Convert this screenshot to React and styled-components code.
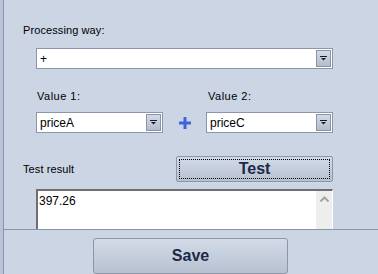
import React from 'react';
import styled, { createGlobalStyle } from 'styled-components';

const Global = createGlobalStyle`
  html, body {
    margin: 0;
    padding: 0;
    background: #cbd5e3;
  }
  body {
    font-family: "Liberation Sans", Arial, sans-serif;
    color: #000;
  }
`

const Window = styled.div`
  width: 378px;
  height: 274px;
  display: flex;
  overflow: hidden;
  background: #cbd5e3;
`

const Edge = styled.div`
  width: 3px;
  flex: none;
  background: #b7c3d7;
  border-right: 1px solid #8d97a7;
`

const Main = styled.div`
  flex: 1;
  display: flex;
  flex-direction: column;
`

const Panel = styled.div`
  height: 205px;
  flex: none;
  overflow: hidden;
  padding: 24px 0 0 19px;
  box-sizing: content-box;
`

const Label = styled.div`
  font-size: 11px;
  line-height: 13px;
  letter-spacing: ${(p) => p.spacing || '0.1px'};
  padding-left: ${(p) => p.indent || 0}px;
`

const Indent = styled.div`
  margin-left: 13px;
  width: 297px;
  margin-top: ${(p) => p.top || 0}px;
`

const Combo = styled.div`
  box-sizing: border-box;
  width: ${(p) => p.width || 297}px;
  height: 21px;
  border: 1px solid #8b96a8;
  background: #fff;
  padding: 1px;
  display: flex;
  align-items: center;
`

const ComboText = styled.span`
  flex: 1;
  font-size: 12px;
  padding-left: 2px;
  color: #000;
`

const ArrowBtn = styled.div`
  box-sizing: border-box;
  width: 15px;
  height: 17px;
  border: 1px solid #8a94a5;
  background: linear-gradient(#d3dae6, #b3bdcd);
  display: flex;
  align-items: center;
  justify-content: center;
`

const ValueGrid = styled.div`
  display: grid;
  grid-template-columns: 127px 43px 127px;
  row-gap: 9px;
  align-items: center;
`

const PlusSign = styled.div`
  display: flex;
  justify-content: center;
`

const TestRow = styled.div`
  display: flex;
  align-items: center;
  justify-content: space-between;
  width: 310px;
  margin-top: 23px;
`

const Button = styled.div`
  box-sizing: border-box;
  width: ${(p) => p.width}px;
  height: ${(p) => p.height}px;
  border: 1px solid #8c96a7;
  border-radius: ${(p) => p.radius || 2}px;
  background: linear-gradient(#d3dbe7, #b7c1d1);
  display: flex;
  align-items: center;
  justify-content: center;
  padding: 2px;
  font-size: 16px;
  font-weight: bold;
  color: #1c2a48;
`

const Focus = styled.div`
  box-sizing: border-box;
  width: 100%;
  height: 100%;
  border: 1px dotted #000;
  display: flex;
  align-items: center;
  justify-content: center;
`

const ResultBox = styled.div`
  box-sizing: border-box;
  width: 297px;
  height: 60px;
  margin: 7px 0 0 13px;
  border-top: 2px solid #6f6f6f;
  border-left: 2px solid #6f6f6f;
  border-right: 1px solid #fff;
  background: #fff;
  display: flex;
`

const ResultText = styled.div`
  flex: 1;
  font-size: 12px;
  padding: 3px 0 0 1px;
`

const ScrollBar = styled.div`
  width: 16px;
  background: #eeeeee;
  display: flex;
  justify-content: center;
  padding-top: 5px;
  align-items: flex-start;
`

const Footer = styled.div`
  flex: 1;
  border-top: 1px solid #8a95a7;
  padding: 8px 0 0 89px;
`

const Arrow = () => (
  <svg width="7" height="5" viewBox="0 0 7 5">
    <rect x="0" y="0" width="7" height="1" fill="#1a1a2a" />
    <path d="M1 2 H6 L3.5 4.5 Z" fill="#1a1a2a" />
  </svg>
)

const Select = ({ value, width }) => (
  <Combo width={width}>
    <ComboText>{value}</ComboText>
    <ArrowBtn><Arrow /></ArrowBtn>
  </Combo>
)

export default function App() {
  return (
    <Window>
      <Global />
      <Edge />
      <Main>
        <Panel>
          <Label>Processing way:</Label>
          <Indent top={11}>
            <Select value="+" />
          </Indent>
          <Indent top={21}>
            <ValueGrid>
              <Label indent={1} spacing="0.5px">Value 1:</Label>
              <div />
              <Label indent={2} spacing="0.5px">Value 2:</Label>
              <Select value="priceA" width={127} />
              <PlusSign>
                <svg width="12" height="12" viewBox="0 0 12 12">
                  <rect x="4.5" y="0" width="3" height="12" fill="#4262de" />
                  <rect x="0" y="4.5" width="12" height="3" fill="#4262de" />
                </svg>
              </PlusSign>
              <Select value="priceC" width={127} />
            </ValueGrid>
          </Indent>
          <TestRow>
            <Label>Test result</Label>
            <Button width={157} height={26}>
              <Focus>Test</Focus>
            </Button>
          </TestRow>
          <ResultBox>
            <ResultText>397.26</ResultText>
            <ScrollBar>
              <svg width="9" height="6" viewBox="0 0 9 6">
                <path d="M0.5 5.5 L4.5 1.5 L8.5 5.5" stroke="#a4a4a4" strokeWidth="2" fill="none" />
              </svg>
            </ScrollBar>
          </ResultBox>
        </Panel>
        <Footer>
          <Button width={195} height={36} radius={3}>Save</Button>
        </Footer>
      </Main>
    </Window>
  );
}
